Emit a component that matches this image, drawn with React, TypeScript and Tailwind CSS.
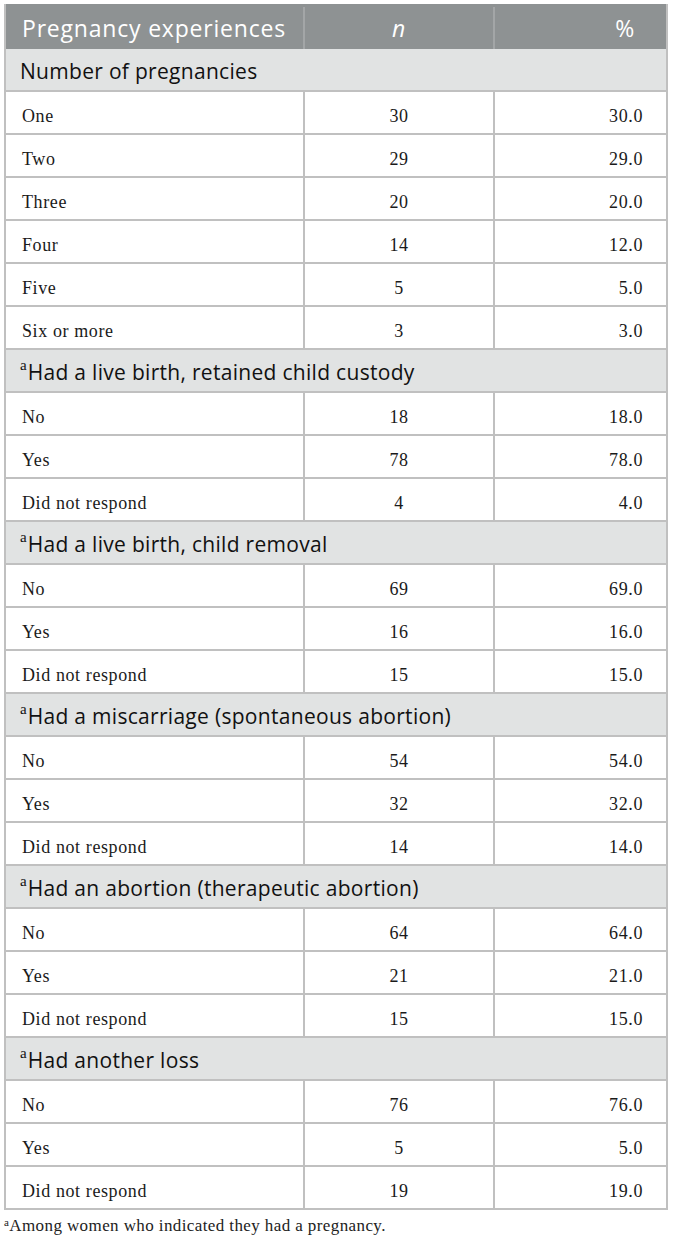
const sections: { title: string; sup: boolean; rows: [string, string, string][] }[] = [
  {
    title: "Number of pregnancies",
    sup: false,
    rows: [
      ["One", "30", "30.0"],
      ["Two", "29", "29.0"],
      ["Three", "20", "20.0"],
      ["Four", "14", "12.0"],
      ["Five", "5", "5.0"],
      ["Six or more", "3", "3.0"],
    ],
  },
  {
    title: "Had a live birth, retained child custody",
    sup: true,
    rows: [
      ["No", "18", "18.0"],
      ["Yes", "78", "78.0"],
      ["Did not respond", "4", "4.0"],
    ],
  },
  {
    title: "Had a live birth, child removal",
    sup: true,
    rows: [
      ["No", "69", "69.0"],
      ["Yes", "16", "16.0"],
      ["Did not respond", "15", "15.0"],
    ],
  },
  {
    title: "Had a miscarriage (spontaneous abortion)",
    sup: true,
    rows: [
      ["No", "54", "54.0"],
      ["Yes", "32", "32.0"],
      ["Did not respond", "14", "14.0"],
    ],
  },
  {
    title: "Had an abortion (therapeutic abortion)",
    sup: true,
    rows: [
      ["No", "64", "64.0"],
      ["Yes", "21", "21.0"],
      ["Did not respond", "15", "15.0"],
    ],
  },
  {
    title: "Had another loss",
    sup: true,
    rows: [
      ["No", "76", "76.0"],
      ["Yes", "5", "5.0"],
      ["Did not respond", "19", "19.0"],
    ],
  },
];

const sans = "font-['Open_Sans',sans-serif]";
const serif = "font-['Liberation_Serif',serif]";

export default function App() {
  return (
    <div className="min-h-[1243px] w-[673px] bg-white pl-[4px] pt-[4px]">
      <div className="w-[664px] border-x-2 border-[#c0c0c0]">
        <div className={`flex h-[45px] items-center bg-[#8e9293] pt-[3px] text-[23px] tracking-[0.8px] text-white ${sans}`}>
          <div className="w-[297px] pl-[16px]">Pregnancy experiences</div>
          <div className="flex h-full w-[190px] items-center justify-center border-l-2 border-[#a3a6a7] italic">n</div>
          <div className="flex h-full w-[173px] items-center justify-end border-l-2 border-[#a3a6a7] pr-[31px]">%</div>
        </div>
        {sections.map((s) => (
          <div key={s.title}>
            <div className={`flex h-[43px] items-center border-b-2 border-[#c0c0c0] bg-[#e1e3e3] pl-[14px] pt-[4px] text-[21px] tracking-[0.3px] text-[#111] ${sans}`}>
              {s.sup && <sup className={`mr-[1px] text-[15px] tracking-normal ${serif}`}>a</sup>}
              {s.title}
            </div>
            {s.rows.map(([label, n, pct]) => (
              <div key={label} className={`flex h-[43px] border-b-2 border-[#c0c0c0] text-[18px] tracking-[0.6px] text-[#1a1a1a] ${serif}`}>
                <div className="flex w-[297px] items-center pl-[16px] pt-[8px]">{label}</div>
                <div className="flex w-[190px] items-center justify-center border-l-2 border-[#c0c0c0] pt-[8px]">{n}</div>
                <div className="flex w-[173px] items-center justify-end border-l-2 border-[#c0c0c0] pr-[23px] pt-[8px]">{pct}</div>
              </div>
            ))}
          </div>
        ))}
      </div>
      <p className={`mt-[6px] text-[17px] leading-[20px] tracking-[0.4px] text-[#222] ${serif}`}>
        <sup className="text-[11px]">a</sup>Among women who indicated they had a pregnancy.
      </p>
    </div>
  );
}
